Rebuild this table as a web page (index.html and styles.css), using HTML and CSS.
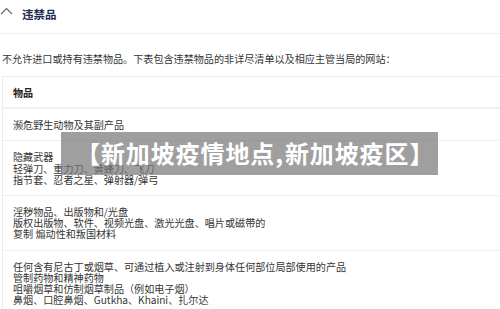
FILE: index.html
```html
<!DOCTYPE html>
<html lang="zh-CN">
<head>
<meta charset="utf-8">
<link rel="stylesheet" href="styles.css">
</head>
<body>
<div class="page">
  <div class="section-head">
    <svg class="chevron" width="13" height="8" viewBox="0 0 13 8"><path d="M1 7 L6.5 1.5 L12 7" fill="none" stroke="#666" stroke-width="1.1"/></svg>
    <h2 class="title">违禁品</h2>
  </div>
  <p class="intro">不允许进口或持有违禁物品。下表包含违禁物品的非详尽清单以及相应主管当局的网站：</p>
  <div class="table">
    <div class="row head">物品</div>
    <div class="row">濒危野生动物及其副产品</div>
    <div class="row">隐藏武器<br>轻弹刀、重力刀、黄蜂刀、飞刀<br>指节套、忍者之星、弹射器/弹弓</div>
    <div class="row">淫秽物品、出版物和/光盘<br>版权出版物、软件、视频光盘、激光光盘、唱片或磁带的<br>复制 煽动性和叛国材料</div>
    <div class="row">任何含有尼古丁或烟草、可通过植入或注射到身体任何部位局部使用的产品<br>管制药物和精神药物<br>咀嚼烟草和仿制烟草制品（例如电子烟）<br>鼻烟、口腔鼻烟、Gutkha、Khaini、扎尔达</div>
  </div>
</div>
<div class="banner">【新加坡疫情地点<span class="comma">,</span>新加坡疫区】</div>
</body>
</html>
```
FILE: styles.css
```css
html, body {
  margin: 0;
  padding: 0;
  background: #fff;
  overflow: hidden;
}
body {
  width: 500px;
  height: 309px;
  position: relative;
  font-family: "Noto Sans CJK SC", "Noto Sans", sans-serif;
  color: #353535;
}
.page {
  padding-left: 2px;
}
.section-head {
  display: flex;
  align-items: center;
  gap: 9px;
  height: 27px;
  border-bottom: 1px solid #efefef;
  margin-left: -2px;
  padding-bottom: 6px;
}
.chevron {
  display: block;
  margin-top: -5px;
}
.title {
  margin: 0;
  font-size: 11.5px;
  line-height: 14px;
  font-weight: 700;
  color: #1f2a50;
}
.intro {
  margin: 18px 0 0;
  font-size: 10.1px;
  line-height: 14px;
}
.table {
  margin-top: 10px;
  border-left: 1px solid #ececec;
  border-top: 1px solid #ececec;
}
.row {
  padding: 10px;
  font-size: 10.1px;
  line-height: 11.2px;
  border-bottom: 1px solid #efefef;
}
.row.head {
  font-weight: 700;
  color: #222;
  padding-bottom: 9px;
  border-bottom: 2px solid #f0f0f0;
}
.banner {
  position: absolute;
  left: 61px;
  top: 132px;
  width: 362px;
  height: 43px;
  padding-left: 15px;
  background: rgba(118, 118, 118, 0.7);
  color: #fff;
  font-size: 24px;
  font-weight: 700;
  line-height: 42px;
  letter-spacing: 0.9px;
  white-space: nowrap;
  overflow: hidden;
}
.comma {
  margin: 0 1px 0 0;
}
```
